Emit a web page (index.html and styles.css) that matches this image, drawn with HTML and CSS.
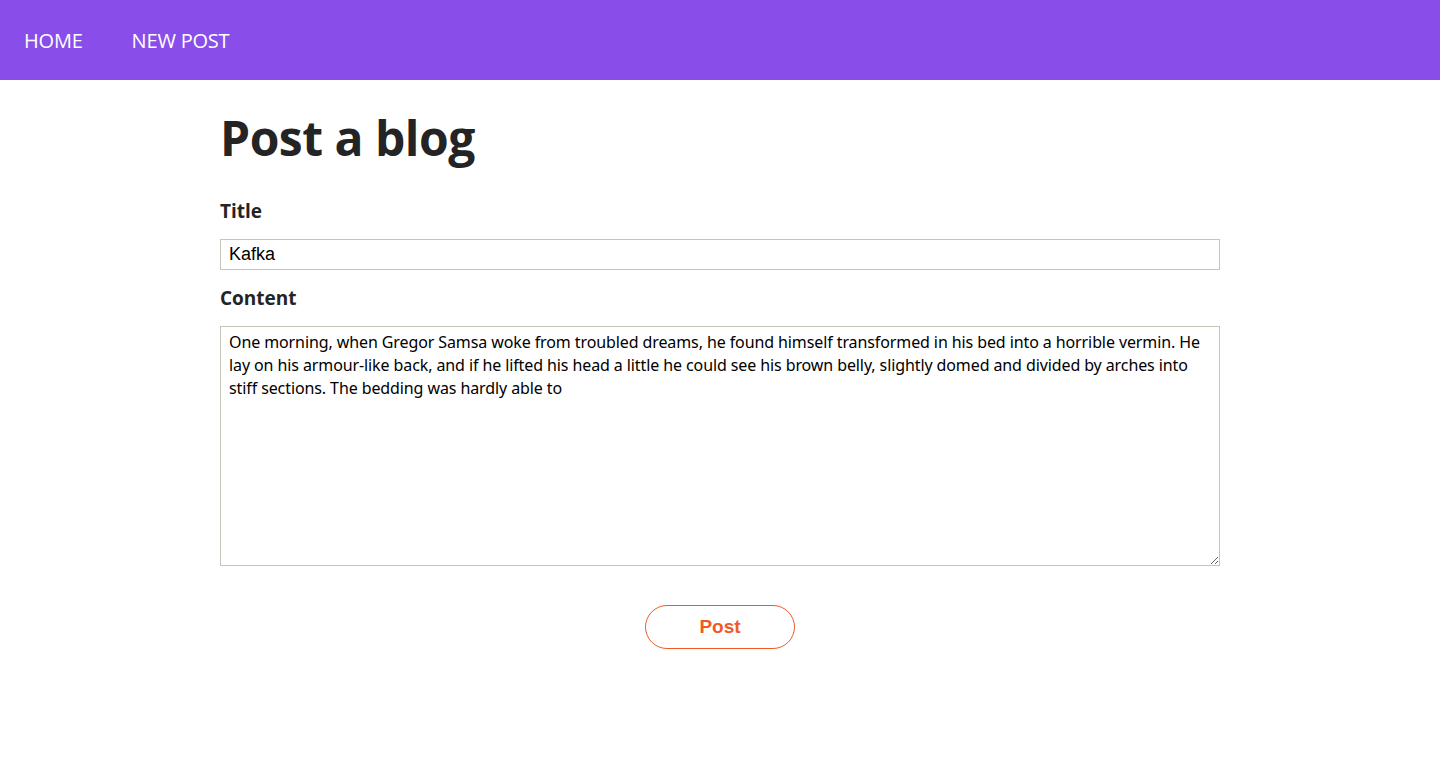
FILE: index.html
```html
<!DOCTYPE html>
<html lang="en">
<head>
<meta charset="utf-8">
<title>Post a blog</title>
<link rel="stylesheet" href="styles.css">
</head>
<body>
<nav class="navbar">
  <a class="nav-link" href="#">HOME</a>
  <a class="nav-link" href="#">NEW POST</a>
</nav>
<main class="container">
  <h1 class="page-title">Post a blog</h1>
  <form class="post-form">
    <label class="field-label" for="title">Title</label>
    <input class="text-input" id="title" type="text" value="Kafka">
    <label class="field-label" for="content">Content</label>
    <textarea class="text-area" id="content">One morning, when Gregor Samsa woke from troubled dreams, he found himself transformed in his bed into a horrible vermin. He lay on his armour-like back, and if he lifted his head a little he could see his brown belly, slightly domed and divided by arches into stiff sections. The bedding was hardly able to</textarea>
    <div class="actions">
      <button class="post-btn" type="button">Post</button>
    </div>
  </form>
</main>
</body>
</html>
```
FILE: styles.css
```css
* { box-sizing: border-box; }
body {
  margin: 0;
  font-family: "Open Sans", "Noto Sans", sans-serif;
  color: #222;
  background: #fff;
}
.navbar {
  height: 80px;
  background: #894eea;
  display: flex;
  align-items: center;
  padding: 0 24px;
  gap: 49px;
}
.nav-link {
  color: #fff;
  text-decoration: none;
  font-size: 20px;
  font-family: "Open Sans", sans-serif;
  letter-spacing: -0.2px;
}
.container {
  width: 1000px;
  margin: 0 auto;
  padding-top: 30px;
}
.page-title {
  margin: 0 0 33px;
  font-size: 48px;
  line-height: 56px;
  font-weight: 700;
  letter-spacing: -0.5px;
  color: #242424;
}
.post-form {
  display: flex;
  flex-direction: column;
}
.field-label {
  font-weight: 700;
  font-size: 19px;
  line-height: 24px;
  color: #242424;
  margin: 0 0 16px;
}
.text-input {
  width: 100%;
  height: 31px;
  border: 1px solid #c8c4bc;
  padding: 0 8px;
  font-family: "Liberation Sans", Arial, sans-serif;
  font-size: 18px;
  color: #000;
  margin: 0 0 16px;
  outline: none;
}
.text-area {
  width: 100%;
  height: 240px;
  border: 1px solid #c8c4bc;
  padding: 4px 8px;
  margin: 0;
  font-family: "Noto Sans", sans-serif;
  font-size: 16px;
  letter-spacing: -0.1px;
  line-height: 23px;
  color: #000;
  resize: vertical;
  outline: none;
}
.actions {
  display: flex;
  justify-content: center;
  margin-top: 39px;
}
.post-btn {
  width: 150px;
  height: 44px;
  border: 1px solid #f05a28;
  border-radius: 22px;
  background: #fff;
  color: #f05a28;
  font-family: "Liberation Sans", Arial, sans-serif;
  font-weight: 700;
  font-size: 19px;
  cursor: pointer;
}
```
